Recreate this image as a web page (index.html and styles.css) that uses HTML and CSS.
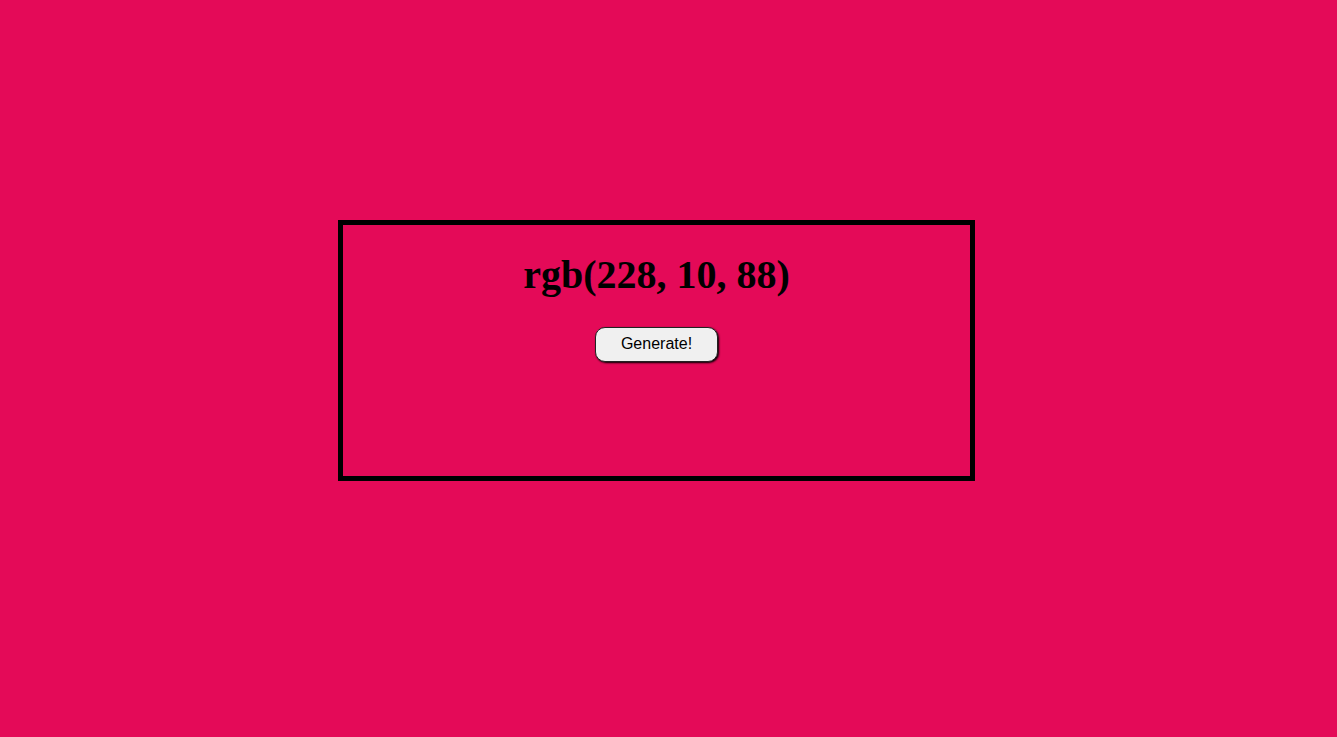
FILE: index.html
```html
<!DOCTYPE html>
<html>
<head>
<meta charset="utf-8">
<link rel="stylesheet" href="styles.css">
</head>
<body>
<div class="box">
  <h1 class="color-name">rgb(228, 10, 88)</h1>
  <button class="gen-btn">Generate!</button>
</div>
</body>
</html>
```
FILE: styles.css
```css
html, body {
  margin: 0;
  padding: 0;
  background: #e40a58;
  height: 100%;
}
body {
  font-family: "Liberation Serif", "Times New Roman", serif;
}
.box {
  box-sizing: border-box;
  width: 637px;
  height: 261px;
  margin: 220px 0 0 338px;
  border: 5px solid #000;
  display: flex;
  flex-direction: column;
  align-items: center;
}
.color-name {
  font-size: 40px;
  font-weight: bold;
  margin: 27px 0 0 0;
  line-height: 46px;
  color: #000;
}
.gen-btn {
  margin-top: 29px;
  width: 123px;
  height: 35px;
  font-family: "Liberation Sans", Arial, sans-serif;
  font-size: 16px;
  color: #000;
  background: #f0f0f0;
  border: 1.5px solid #222;
  border-radius: 10px;
  box-shadow: 1px 1px 2px #000;
  padding: 0 0 2px 0;
}
```
